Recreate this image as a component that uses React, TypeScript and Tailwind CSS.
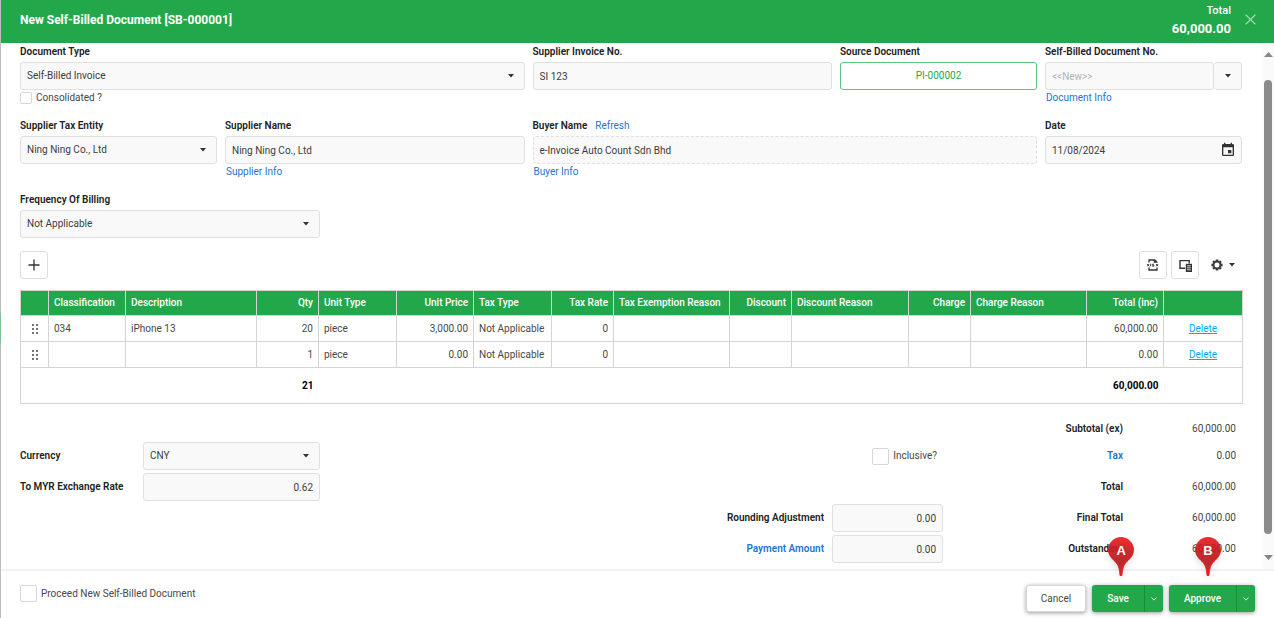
import { useState } from "react";
import type { ReactNode } from "react";
import { MdEvent } from "react-icons/md";

type Column = {
  key: string;
  title: string;
  width: number;
  right?: boolean;
};

type Line = { id: number } & Record<string, string | number>;

const columns: Column[] = [
  { key: "classification", title: "Classification", width: 77 },
  { key: "description", title: "Description", width: 131 },
  { key: "qty", title: "Qty", width: 62, right: true },
  { key: "unitType", title: "Unit Type", width: 78 },
  { key: "unitPrice", title: "Unit Price", width: 77, right: true },
  { key: "taxType", title: "Tax Type", width: 78 },
  { key: "taxRate", title: "Tax Rate", width: 62, right: true },
  { key: "taxExemption", title: "Tax Exemption Reason", width: 116 },
  { key: "discount", title: "Discount", width: 62, right: true },
  { key: "discountReason", title: "Discount Reason", width: 117 },
  { key: "charge", title: "Charge", width: 62, right: true },
  { key: "chargeReason", title: "Charge Reason", width: 116 },
  { key: "total", title: "Total (inc)", width: 77, right: true },
];

const initialLines: Line[] = [
  {
    id: 1,
    classification: "034",
    description: "iPhone 13",
    qty: "20",
    unitType: "piece",
    unitPrice: "3,000.00",
    taxType: "Not Applicable",
    taxRate: "0",
    total: "60,000.00",
  },
  {
    id: 2,
    qty: "1",
    unitType: "piece",
    unitPrice: "0.00",
    taxType: "Not Applicable",
    taxRate: "0",
    total: "0.00",
  },
];

const inputClass =
  "block h-7 w-full rounded-[3px] border border-[#e0e0e0] bg-[#f9f9f9] px-1.5 text-[#3c3c3c] outline-none";
const checkClass =
  "shrink-0 appearance-none rounded-[2px] border border-[#d6d6d6] bg-white";
const linkClass = "text-[#2474d2]";
const labelClass = "font-semibold text-[#222]";

const Caret = ({ className = "" }: { className?: string }) => (
  <svg viewBox="0 0 6 4" className={`h-1 w-1.5 fill-[#333] ${className}`}>
    <path d="M0 0h6L3 3.4z" />
  </svg>
);

const Chevron = () => (
  <svg viewBox="0 0 6 4" className="h-1 w-1.5 fill-none stroke-white">
    <path d="M.4.5 3 3.1 5.6.5" strokeWidth="0.9" />
  </svg>
);

const DragDots = () => (
  <svg viewBox="0 0 6 10" className="mx-auto h-2.5 w-1.5 fill-[#333]">
    {[1, 5, 9].map((y) => (
      <g key={y}>
        <circle cx="1" cy={y} r="0.9" />
        <circle cx="5" cy={y} r="0.9" />
      </g>
    ))}
  </svg>
);

const ExportIcon = () => (
  <svg viewBox="0 0 12 12" className="h-3 w-3 fill-none stroke-[#333]">
    <path d="M2 3.6V1h5.8L10 3.2v.6M2 8.6V11h8V8.600M7.400 1v2.200H10" strokeWidth="1.3" />
    <path
      d="M.2 5l1.900 2.300M2.100 5 .2 7.300M3.700 4.700v2.700M7 5.200H5.400v.9h1.500v1.100H5.200M9 5l2.100 2.300M11.100 5 9 7.300"
      strokeWidth="0.9"
    />
  </svg>
);

const ColumnsIcon = () => (
  <svg viewBox="0 0 13 13" className="h-[13px] w-[13px]">
    <path d="M6.2 9.3H1V1.6h9.2v3" fill="none" stroke="#333" strokeWidth="1.4" />
    <path d="M6.8 4.8H13V13H6.800z" fill="#333" />
    <path d="M8 6.8h3.800M8 8.800h3.800M8 10.800h3.800" stroke="#fff" strokeWidth="0.8" />
  </svg>
);

const GearIcon = () => (
  <svg viewBox="0 0 12 12" className="h-3 w-3 fill-none stroke-[#3a3a3a]">
    <circle cx="6" cy="6" r="3.5" strokeWidth="2" />
    {[0, 45, 90, 135].map((angle) => (
      <path
        key={angle}
        d="M6 .4v1.6M6 10v1.6"
        strokeWidth="2.4"
        transform={`rotate(${angle} 6 6)`}
      />
    ))}
  </svg>
);

const Field = ({
  label,
  id,
  span,
  extra,
  below,
  children,
}: {
  label: string;
  id: string;
  span: string;
  extra?: ReactNode;
  below?: ReactNode;
  children: ReactNode;
}) => (
  <div className={span}>
    <div className="mb-0.5 flex gap-2 pt-px">
      <label htmlFor={id} className={labelClass}>
        {label}
      </label>
      {extra}
    </div>
    {children}
    {below}
  </div>
);

const Select = ({ id, value }: { id: string; value: string }) => (
  <div className="relative">
    <select id={id} className={`${inputClass} appearance-none`}>
      <option>{value}</option>
    </select>
    <Caret className="pointer-events-none absolute top-3 right-[11px]" />
  </div>
);

const Pin = ({ letter, className }: { letter: string; className: string }) => (
  <div className={`pointer-events-none absolute -top-12 h-[39px] w-[26px] ${className}`}>
    <svg viewBox="0 0 26 39" className="h-full w-full drop-shadow-md">
      <defs>
        <linearGradient id={`pin${letter}`} x1="0" y1="0" x2="0" y2="1">
          <stop offset="0" stopColor="#ee1c1c" />
          <stop offset="0.3" stopColor="#c91a1f" />
          <stop offset="0.7" stopColor="#b8181c" />
          <stop offset="1" stopColor="#f00f0f" />
        </linearGradient>
      </defs>
      <path
        d="M13 .5C6 .5.5 6 .5 13c0 5 3 8.2 6.5 11.5 3.5 3.4 4.5 7 5 14h2c.5-7 1.5-10.6 5-14C22.5 21.2 25.5 18 25.5 13 25.5 6 20 .5 13 .5z"
        fill={`url(#pin${letter})`}
        fillOpacity="0.92"
        stroke="#e01818"
        strokeWidth="0.8"
      />
    </svg>
    <span className="absolute inset-x-0 top-1.5 text-center font-['Liberation_Sans',sans-serif] text-[13px] leading-4 font-bold text-white">
      {letter}
    </span>
  </div>
);

const SplitButton = ({ text, pin, pinClass }: { text: string; pin: string; pinClass: string }) => (
  <div className="relative flex h-[27px] rounded-[3px] bg-[#22a84b] text-white shadow-[0_1px_4px_rgba(0,0,0,0.4)]">
    <button className="border-r border-[#1a8a3c] px-[15px] font-medium">{text}</button>
    <button aria-label={`${text} options`} className="flex w-[18px] items-center justify-center">
      <Chevron />
    </button>
    <Pin letter={pin} className={pinClass} />
  </div>
);

const Total = ({ label, value, link }: { label: string; value: string; link?: boolean }) => (
  <>
    <span className={`w-[180px] text-right ${labelClass}`}>
      {link ? (
        <a href="#tax" className={linkClass}>
          {label}
        </a>
      ) : (
        label
      )}
    </span>
    <span className="w-[119px] pr-1.5 text-right text-[#444]">{value}</span>
  </>
);

const App = () => {
  const [lines, setLines] = useState<Line[]>(initialLines);

  const handleDelete = (id: number) => {
    setLines((current) => current.filter((line) => line.id !== id));
  };

  const handleAdd = () => {
    setLines((current) => [...current, { id: Date.now(), qty: "1" }]);
  };

  return (
    <div className="relative flex h-screen flex-col border-l border-[#bdbdbd] bg-white font-[Roboto,sans-serif] text-[10px] leading-4 text-[#484848]">
      <div className="absolute top-[313px] -left-px h-[30px] w-px bg-[#7fc296]" />

      <header className="flex h-[43px] shrink-0 items-center bg-[#22a84b] pr-[18px] pl-[19px] text-white">
        <h1 className="flex-1 pb-1 text-xs leading-4 font-bold">
          New Self-Billed Document [SB-000001]
        </h1>
        <div className="mr-[14px] pb-[3px] text-right">
          <div className="text-[11px] font-medium">Total</div>
          <div className="pt-0.5 text-[13px] font-bold">60,000.00</div>
        </div>
        <button aria-label="Close" className="pb-1">
          <svg viewBox="0 0 11 11" className="h-[11px] w-[11px] stroke-[#a9ddb9]">
            <path d="M.6.6 10.4 10.4M10.4.6.6 10.4" strokeWidth="1.3" />
          </svg>
        </button>
      </header>

      <main className="flex min-h-0 flex-1">
        <div className="min-w-0 flex-1 overflow-hidden pr-5 pl-[19px]">
          <div className="grid grid-cols-12 gap-x-2 gap-y-[11px]">
            <Field
              label="Document Type"
              id="docType"
              span="col-span-5"
              below={
                <label className="flex h-4 items-center gap-1">
                  <input type="checkbox" className={`${checkClass} h-3 w-3`} />
                  Consolidated ?
                </label>
              }
            >
              <Select id="docType" value="Self-Billed Invoice" />
            </Field>
            <Field label="Supplier Invoice No." id="invoiceNo" span="col-span-3">
              <input id="invoiceNo" className={inputClass} defaultValue="SI 123" />
            </Field>
            <Field label="Source Document" id="source" span="col-span-2">
              <button
                id="source"
                className="block h-7 w-full rounded-[3px] border border-[#5fc27e] text-[#22a84b]"
              >
                PI-000002
              </button>
            </Field>
            <Field
              label="Self-Billed Document No."
              id="docNo"
              span="col-span-2"
              below={
                <a href="#document" className={`ml-px ${linkClass}`}>
                  Document Info
                </a>
              }
            >
              <div className="flex">
                <input
                  id="docNo"
                  placeholder="<<New>>"
                  className={`${inputClass} placeholder:text-[#b4b4b4]`}
                />
                <button
                  aria-label="Number formats"
                  className="flex h-7 w-7 shrink-0 items-center justify-center rounded-[3px] border border-l-0 border-[#e0e0e0] bg-[#f9f9f9]"
                >
                  <Caret />
                </button>
              </div>
            </Field>

            <Field label="Supplier Tax Entity" id="taxEntity" span="col-span-2">
              <Select id="taxEntity" value="Ning Ning Co., Ltd" />
            </Field>
            <Field
              label="Supplier Name"
              id="supplier"
              span="col-span-3"
              below={
                <a href="#supplier" className={`ml-px ${linkClass}`}>
                  Supplier Info
                </a>
              }
            >
              <input id="supplier" className={inputClass} defaultValue="Ning Ning Co., Ltd" />
            </Field>
            <Field
              label="Buyer Name"
              id="buyer"
              span="col-span-5"
              extra={
                <a href="#refresh" className={linkClass}>
                  Refresh
                </a>
              }
              below={
                <a href="#buyer" className={`ml-px ${linkClass}`}>
                  Buyer Info
                </a>
              }
            >
              <input
                id="buyer"
                readOnly
                className={`${inputClass} border-dashed`}
                defaultValue="e-Invoice Auto Count Sdn Bhd"
              />
            </Field>
            <Field label="Date" id="date" span="col-span-2">
              <div className="relative">
                <input id="date" className={inputClass} defaultValue="11/08/2024" />
                <button aria-label="Pick a date" className="absolute top-1.5 right-1.5">
                  <MdEvent className="h-4 w-4 text-[#333]" />
                </button>
              </div>
            </Field>

            <Field label="Frequency Of Billing" id="frequency" span="col-span-3">
              <Select id="frequency" value="Not Applicable" />
            </Field>
          </div>

          {/* Toolbar */}
          <div className="mt-[13px] mb-[11px] flex items-center">
            <button
              aria-label="Add line"
              onClick={handleAdd}
              className="flex h-7 w-7 items-center justify-center rounded-[3px] border border-[#dedede]"
            >
              <svg viewBox="0 0 12 12" className="h-3 w-3 stroke-[#333]">
                <path d="M6 .5v11M.5 6h11" strokeWidth="1.3" />
              </svg>
            </button>
            <button
              aria-label="Export to xlsx"
              className="ml-auto flex h-7 w-7 items-center justify-center rounded-[3px] border border-[#dedede]"
            >
              <ExportIcon />
            </button>
            <button
              aria-label="Column chooser"
              className="ml-1 flex h-7 w-7 items-center justify-center rounded-[3px] border border-[#dedede]"
            >
              <ColumnsIcon />
            </button>
            <button aria-label="Settings" className="mr-[7px] ml-3 flex items-center gap-1.5">
              <GearIcon />
              <Caret />
            </button>
          </div>

          <table className="w-full table-fixed border-collapse border border-[#d4d4d4]">
            <colgroup>
              <col width={28} />
              {columns.map((c) => (
                <col key={c.key} width={c.width} />
              ))}
              <col width={79} />
            </colgroup>
            <thead>
              <tr className="h-[25px] bg-[#22a84b] text-white">
                <th className="border border-[#d4d4d4]" />
                {columns.map((c) => (
                  <th
                    key={c.key}
                    className={`border border-[#d4d4d4] px-[5px] font-medium whitespace-nowrap ${
                      c.right ? "text-right" : "text-left"
                    }`}
                  >
                    {c.title}
                  </th>
                ))}
                <th className="border border-[#d4d4d4]" />
              </tr>
            </thead>
            <tbody>
              {lines.map((line) => (
                <tr key={line.id} className="h-[26px]">
                  <td className="border border-[#d4d4d4]">
                    <DragDots />
                  </td>
                  {columns.map((c) => (
                    <td
                      key={c.key}
                      className={`border border-[#d4d4d4] px-[5px] whitespace-nowrap ${
                        c.right ? "text-right" : "text-left"
                      }`}
                    >
                      {line[c.key]}
                    </td>
                  ))}
                  <td className="border border-[#d4d4d4] text-center">
                    <a
                      href="#delete"
                      onClick={() => handleDelete(line.id)}
                      className="text-[#03a9f4] underline"
                    >
                      Delete
                    </a>
                  </td>
                </tr>
              ))}
            </tbody>
            <tfoot>
              <tr className="h-9 font-bold text-black">
                <td colSpan={3} />
                <td className="px-[5px] text-right">21</td>
                <td colSpan={9} />
                <td className="px-[5px] text-right">60,000.00</td>
                <td />
              </tr>
            </tfoot>
          </table>

          {/* Currency and totals */}
          <div className="mt-[7px] flex items-start justify-between">
            <div className="mt-[31px] grid w-[300px] grid-cols-[123px_1fr] items-center gap-y-[3px]">
              <label htmlFor="currency" className={labelClass}>
                Currency
              </label>
              <Select id="currency" value="CNY" />
              <label htmlFor="rate" className={labelClass}>
                To MYR Exchange Rate
              </label>
              <input id="rate" className={`${inputClass} text-right`} defaultValue="0.62" />
            </div>

            <div className="grid gap-y-[3px]">
              <div className="flex h-7 items-end justify-end pb-0.5">
                <Total label="Subtotal (ex)" value="60,000.00" />
              </div>
              <div className="flex h-7 items-center justify-end">
                <label className="mr-1.5 flex items-center gap-1">
                  <input type="checkbox" className={`${checkClass} h-[17px] w-[17px]`} />
                  Inclusive?
                </label>
                <Total label="Tax" value="0.00" link />
              </div>
              <div className="flex h-7 items-center justify-end">
                <Total label="Total" value="60,000.00" />
              </div>
              <div className="flex h-7 items-center justify-end">
                <label htmlFor="rounding" className={`mr-2 ${labelClass}`}>
                  Rounding Adjustment
                </label>
                <div className="w-[111px]">
                  <input id="rounding" className={`${inputClass} text-right`} defaultValue="0.00" />
                </div>
                <Total label="Final Total" value="60,000.00" />
              </div>
              <div className="flex h-7 items-center justify-end">
                <label htmlFor="payment" className={`mr-2 font-semibold ${linkClass}`}>
                  Payment Amount
                </label>
                <div className="w-[111px]">
                  <input id="payment" className={`${inputClass} text-right`} defaultValue="0.00" />
                </div>
                <Total label="Outstanding" value="60,000.00" />
              </div>
            </div>
          </div>
        </div>

        {/* Scrollbar */}
        <div className="flex w-3 shrink-0 flex-col items-center bg-[#fafafa] py-[9px]">
          <svg viewBox="0 0 9 5" className="h-[5px] w-[9px] fill-[#858585]">
            <path d="M4.5 0 9 5H0z" />
          </svg>
          <div className="mt-[23px] mb-[21px] w-2 flex-1 rounded-full bg-[#8b8b8b]" />
          <svg viewBox="0 0 9 5" className="h-[5px] w-[9px] fill-[#858585]">
            <path d="M0 0h9L4.5 5z" />
          </svg>
        </div>
      </main>

      <footer className="flex h-[49px] shrink-0 items-start gap-1.5 border-t-2 border-[#f2f2f2] pt-[14px] pr-[19px] pl-[19px]">
        <label className="mr-auto flex items-center gap-1">
          <input type="checkbox" className={`${checkClass} h-[17px] w-[17px]`} />
          Proceed New Self-Billed Document
        </label>
        <button className="h-[27px] rounded-[3px] border border-[#d8d8d8] bg-white px-[14px] shadow-[0_1px_4px_rgba(0,0,0,0.4)]">
          Cancel
        </button>
        <SplitButton text="Save" pin="A" pinClass="left-4" />
        <SplitButton text="Approve" pin="B" pinClass="left-[26px]" />
      </footer>
    </div>
  );
};

export default App;
